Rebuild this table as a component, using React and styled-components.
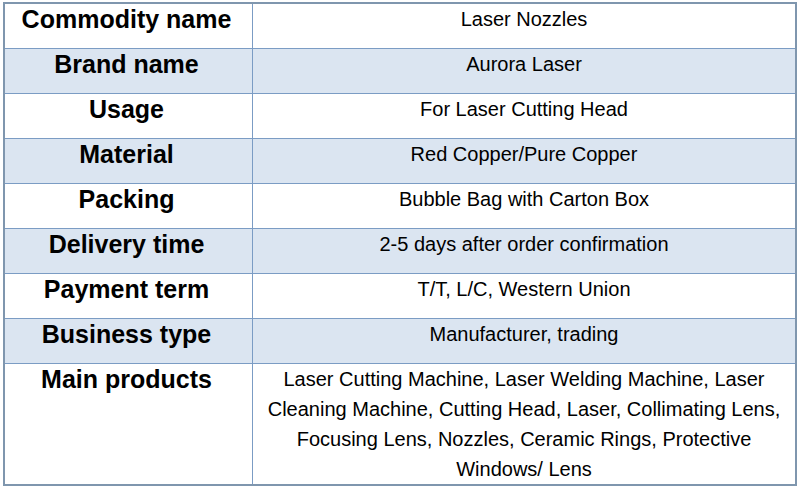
import React from "react"
import styled, { createGlobalStyle } from "styled-components"

const GlobalStyle = createGlobalStyle`
  html, body {
    margin: 0;
    padding: 0;
    background: #ffffff;
  }
`

const Page = styled.div`
  padding: 2px 0 0 3px;
  width: 800px;
  height: 486px;
  box-sizing: border-box;
  background: #fff;
`

const Table = styled.table`
  width: 794px;
  border-collapse: collapse;
  border: 2px solid #7f96ae;
  table-layout: fixed;
  font-family: "Liberation Sans", Arial, sans-serif;
  color: #000;
`

const Row = styled.tr`
  height: ${(p) => (p.$tall ? "116px" : "45px")};
  background: ${(p) => (p.$shaded ? "#dbe5f1" : "#ffffff")};
`

const Label = styled.td`
  width: 243px;
  border: 1px solid #7b9cc4;
  padding: 0 4px 0 0;
  vertical-align: top;
  text-align: center;
  font-weight: bold;
  font-size: 25px;
  line-height: 30px;
`

const Value = styled.td`
  border: 1px solid #7b9cc4;
  padding: 0 12px;
  vertical-align: top;
  text-align: center;
  font-size: 20px;
  line-height: 30px;
`

const rows = [
  ["Commodity name", "Laser Nozzles"],
  ["Brand name", "Aurora Laser"],
  ["Usage", "For Laser Cutting Head"],
  ["Material", "Red Copper/Pure Copper"],
  ["Packing", "Bubble Bag with Carton Box"],
  ["Delivery time", "2-5 days after order confirmation"],
  ["Payment term", "T/T, L/C, Western Union"],
  ["Business type", "Manufacturer, trading"],
  [
    "Main products",
    "Laser Cutting Machine, Laser Welding Machine, Laser Cleaning Machine, Cutting Head, Laser, Collimating Lens, Focusing Lens, Nozzles, Ceramic Rings, Protective Windows/ Lens",
  ],
]

const App = () => {
  return (
    <Page>
      <GlobalStyle />
      <Table>
        <tbody>
          {rows.map(([label, value], i) => (
            <Row key={label} $shaded={i % 2 === 1} $tall={i === rows.length - 1}>
              <Label>{label}</Label>
              <Value>{value}</Value>
            </Row>
          ))}
        </tbody>
      </Table>
    </Page>
  )
}

export default App
